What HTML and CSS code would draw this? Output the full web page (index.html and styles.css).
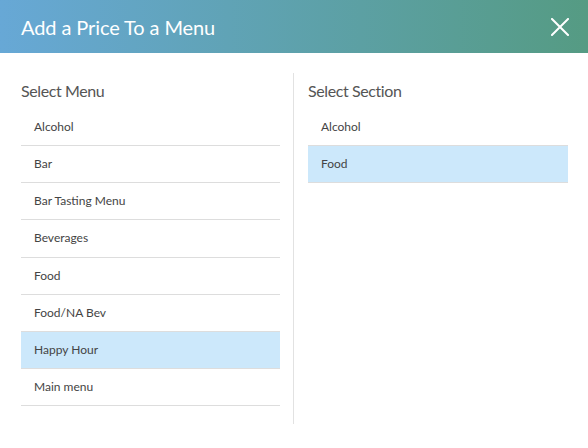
FILE: index.html
```html
<!DOCTYPE html>
<html lang="en">
<head>
  <meta charset="UTF-8">
  <meta name="viewport" content="width=device-width, initial-scale=1.0">
  <title>Add a Price To a Menu</title>
  <link rel="stylesheet" href="styles.css">
</head>
<body>
  <div class="modal">
    <div class="modal-header">
      <h1 class="modal-title">Add a Price To a Menu</h1>
      <button class="close-btn" aria-label="Close">
        <svg width="18" height="18" viewBox="0 0 18 18">
          <path d="M1 1 L17 17 M17 1 L1 17" stroke="#fff" stroke-width="2" stroke-linecap="square" fill="none"/>
        </svg>
      </button>
    </div>

    <div class="modal-body">
      <div class="picker picker-menu">
        <h2 class="picker-title">Select Menu</h2>
        <ul class="picker-list">
          <li class="picker-item">Alcohol</li>
          <li class="picker-item">Bar</li>
          <li class="picker-item">Bar Tasting Menu</li>
          <li class="picker-item">Beverages</li>
          <li class="picker-item">Food</li>
          <li class="picker-item">Food/NA Bev</li>
          <li class="picker-item selected">Happy Hour</li>
          <li class="picker-item">Main menu</li>
        </ul>
      </div>

      <div class="picker picker-section">
        <h2 class="picker-title">Select Section</h2>
        <ul class="picker-list">
          <li class="picker-item">Alcohol</li>
          <li class="picker-item selected">Food</li>
        </ul>
      </div>
    </div>
  </div>

  <script>
    // pick one row per list
    document.querySelectorAll(".picker-list").forEach(list => {
      list.addEventListener("click", e => {
        const item = e.target.closest(".picker-item");
        if (!item) return;
        list.querySelectorAll(".picker-item").forEach(i => i.classList.remove("selected"));
        item.classList.add("selected");
      });
    });
  </script>
</body>
</html>
```

FILE: styles.css
```css
body {
  margin: 0;
  font-family: Lato, "Open Sans", sans-serif;
  background-color: #fff;
  color: #444;
}

.modal {
  width: 588px;
  background-color: #fff;
}

.modal-header {
  height: 53px;
  display: flex;
  align-items: center;
  justify-content: space-between;
  padding: 0 19px 0 21px;
  background: linear-gradient(to right, #67a8d6, #559b83);
  box-sizing: border-box;
}

.modal-title {
  margin: 0;
  font-size: 20px;
  font-weight: normal;
  letter-spacing: -0.1px;
  color: #fff;
}

.close-btn {
  display: flex;
  padding: 0;
  border: none;
  background: none;
  cursor: pointer;
}

.modal-body {
  display: grid;
  grid-template-columns: 273px 274px;
  padding: 20px 20px 25px 21px;
}

.picker {
  padding-bottom: 18px;
}

.picker-menu {
  padding-right: 13px;
  border-right: 1px solid #e2e2e2;
}

.picker-section {
  padding-left: 14px;
}

.picker-title {
  margin: 0 0 8px;
  padding-top: 8px;
  font-size: 16px;
  line-height: 20px;
  font-weight: normal;
  letter-spacing: -0.4px;
  color: #555;
}

.picker-list {
  list-style: none;
  margin: 0;
  padding: 0;
}

.picker-item {
  height: 36.15px;
  line-height: 36px;
  padding: 0 13px;
  font-size: 12px;
  color: #444;
  border-bottom: 1px solid #ddd;
  cursor: pointer;
}

.picker-item.selected {
  background-color: #cce8fb;
}
```
